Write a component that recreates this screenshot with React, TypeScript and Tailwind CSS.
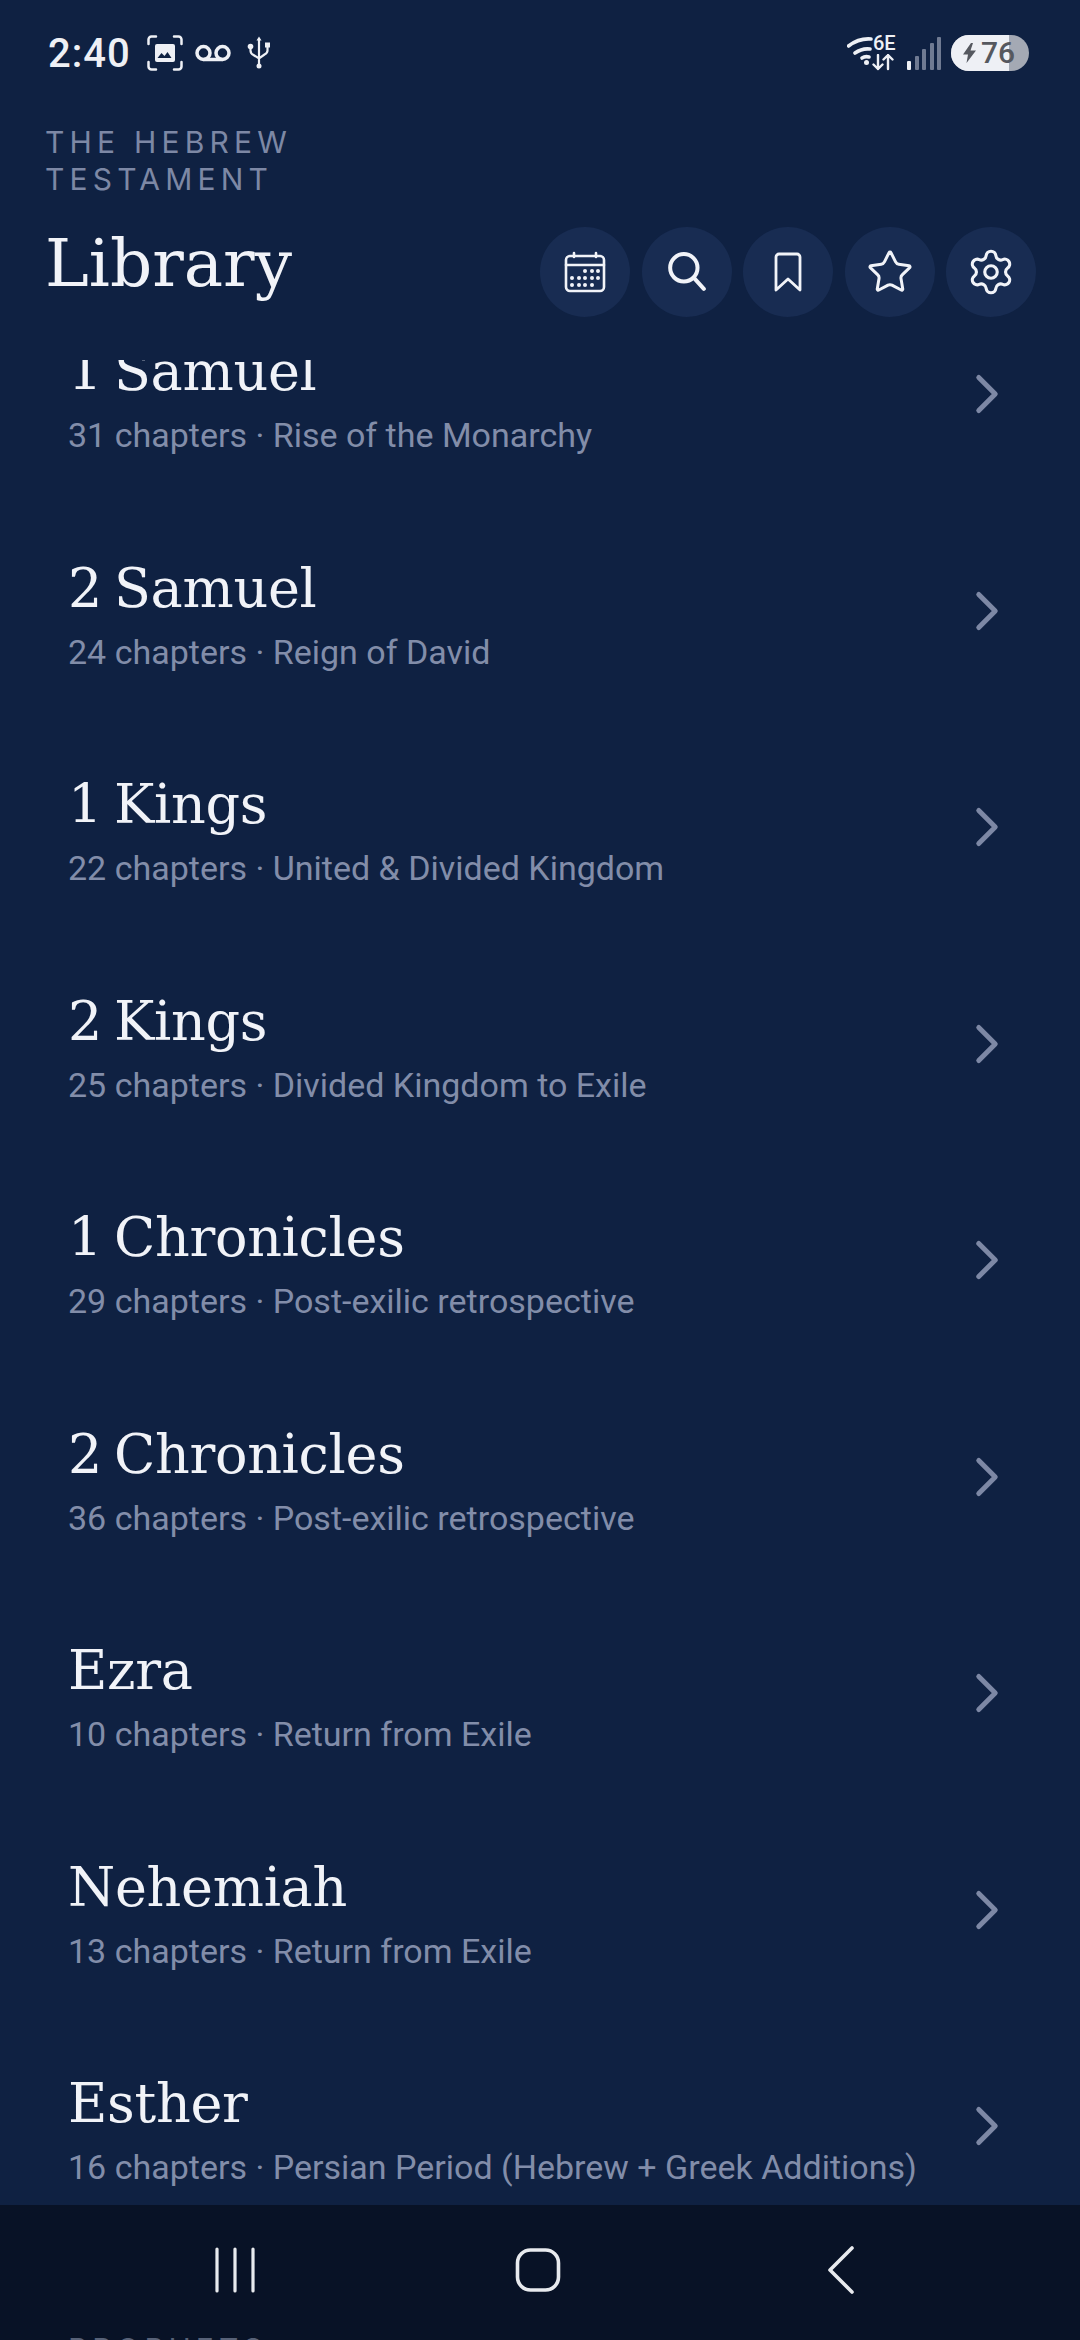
import { ChevronRight, Star, Settings } from 'lucide-react';

const books = [
  { name: '1 Samuel', info: '31 chapters · Rise of the Monarchy' },
  { name: '2 Samuel', info: '24 chapters · Reign of David' },
  { name: '1 Kings', info: '22 chapters · United & Divided Kingdom' },
  { name: '2 Kings', info: '25 chapters · Divided Kingdom to Exile' },
  { name: '1 Chronicles', info: '29 chapters · Post-exilic retrospective' },
  { name: '2 Chronicles', info: '36 chapters · Post-exilic retrospective' },
  { name: 'Ezra', info: '10 chapters · Return from Exile' },
  { name: 'Nehemiah', info: '13 chapters · Return from Exile' },
  { name: 'Esther', info: '16 chapters · Persian Period (Hebrew + Greek Additions)' },
];

function CalendarIcon() {
  return (
    <svg width="42" height="42" viewBox="0 0 42 42" fill="none" stroke="#f1f3f8" strokeWidth="2.6" strokeLinecap="round">
      <rect x="2" y="5" width="38" height="35" rx="4" />
      <path d="M2 14h38M10 2v4M32 2v4" />
      <g fill="#f1f3f8" stroke="none">
        <circle cx="21" cy="20" r="2" /><circle cx="28" cy="20" r="2" /><circle cx="34" cy="20" r="2" />
        <circle cx="8" cy="27" r="2" /><circle cx="15" cy="27" r="2" /><circle cx="21" cy="27" r="2" /><circle cx="28" cy="27" r="2" /><circle cx="34" cy="27" r="2" />
        <circle cx="8" cy="34" r="2" /><circle cx="15" cy="34" r="2" /><circle cx="21" cy="34" r="2" /><circle cx="28" cy="34" r="2" />
      </g>
    </svg>
  );
}

function SearchIcon() {
  return (
    <svg width="38" height="40" viewBox="0 0 36 38" fill="none" stroke="#f1f3f8" strokeWidth="3.8" strokeLinecap="round">
      <circle cx="15" cy="15" r="13" />
      <path d="M25 25l9 10" />
    </svg>
  );
}

function BookmarkIcon() {
  return (
    <svg width="28" height="40" viewBox="0 0 28 40" fill="none" stroke="#f1f3f8" strokeWidth="2.8" strokeLinejoin="round">
      <path d="M2 38V5a3 3 0 0 1 3-3h18a3 3 0 0 1 3 3v33L14 27z" />
    </svg>
  );
}

function StatusLeft() {
  return (
    <div className="flex items-center">
      <span className="text-[40px] leading-none font-medium text-[#eef0f5] font-['Roboto',sans-serif] tracking-[1px] mt-[2px]">2:40</span>
      <svg className="ml-[16px]" width="36" height="36" viewBox="0 0 36 36" fill="none" stroke="#eef0f5" strokeWidth="2.5" strokeLinecap="round">
        <path d="M1.500 9V4.500a3 3 0 0 1 3-3H9M27 1.500h4.500a3 3 0 0 1 3 3V9M34.500 27v4.500a3 3 0 0 1-3 3H27M9 34.500H4.500a3 3 0 0 1-3-3V27" />
        <rect x="8" y="9" width="20" height="18" rx="2" fill="#eef0f5" stroke="none" />
        <path d="M10.500 23l4-5 3 3 3-4 4 6z" fill="#0f2142" stroke="none" />
      </svg>
      <svg className="ml-[12px]" width="36" height="18" viewBox="0 0 36 18" fill="none" stroke="#eef0f5" strokeWidth="3.500">
        <circle cx="8.500" cy="9" r="6.500" /><circle cx="27.500" cy="9" r="6.500" />
        <path d="M8.500 15.500h19" />
      </svg>
      <svg className="ml-[16px]" width="24" height="34" viewBox="0 0 24 34" fill="#eef0f5" stroke="#eef0f5" strokeWidth="2.200" strokeLinecap="round">
        <path d="M12 3v27M3.500 11v3.500q0 3 3 4.500l5.500 3.500 5.500-4q3-1.500 3-4V10" fill="none" />
        <path d="M12 0.500l-2.500 4h5z" stroke="none" />
        <circle cx="12" cy="30" r="2.500" stroke="none" />
        <circle cx="3.500" cy="10.500" r="2.800" stroke="none" />
        <rect x="18" y="6.500" width="5" height="5" stroke="none" />
      </svg>
    </div>
  );
}

function StatusRight() {
  return (
    <div className="flex items-center">
      <div className="relative w-[50px] h-[36px]">
        <svg width="30" height="32" viewBox="0 0 30 32" fill="none" stroke="#eef0f5" strokeWidth="3.600" strokeLinecap="round" className="absolute left-0 top-0">
          <path d="M1.500 11Q12 3 24 4M8 18q7-5 15-4" />
          <path d="M15 23q3-2 7-1" />
          <circle cx="19.500" cy="27.500" r="2.500" fill="#eef0f5" stroke="none" />
        </svg>
        <span className="absolute left-[26px] top-[-1px] text-[20px] leading-[18px] font-medium text-[#eef0f5] font-['Roboto',sans-serif]">6E</span>
        <svg width="22" height="17" viewBox="0 0 22 17" fill="none" stroke="#eef0f5" strokeWidth="2.400" strokeLinecap="round" strokeLinejoin="round" className="absolute left-[25px] top-[19px]">
          <path d="M6 1v14M1.500 10.500L6 15l4.500-4.500M16 15V1M11.500 5.500L16 1l4.500 4.500" />
        </svg>
      </div>
      <div className="ml-[10px] flex items-end gap-[3.500px] h-[34px]">
        <div className="w-[4px] h-[9px] rounded-[1px] bg-[#eef0f5]" />
        <div className="w-[4px] h-[14px] rounded-[1px] bg-[#6f7a92]" />
        <div className="w-[4px] h-[21px] rounded-[1px] bg-[#6f7a92]" />
        <div className="w-[4px] h-[27px] rounded-[1px] bg-[#6f7a92]" />
        <div className="w-[4px] h-[33px] rounded-[1px] bg-[#6f7a92]" />
      </div>
      <div className="relative ml-[10px] w-[78px] h-[36px] rounded-full overflow-hidden bg-[#a4a9b4] flex items-center">
        <div className="absolute left-0 top-0 bottom-0 w-[58px] bg-[#eef0f5]" />
        <svg className="relative ml-[11px]" width="15" height="20" viewBox="0 0 15 20" fill="#55585f">
          <path d="M9 0L1 11.500h5L4.500 20 14 7.500H8.500L11 0z" />
        </svg>
        <span className="relative ml-[4px] text-[30px] leading-none font-medium text-[#55585f] font-['Roboto',sans-serif]">76</span>
      </div>
    </div>
  );
}

export default function App() {
  return (
    <div className="relative w-[1080px] h-[2340px] overflow-hidden bg-[#0f2142] flex flex-col">
      <div className="flex justify-between items-center h-[104px] pl-[48px] pr-[51px] pt-[1px] shrink-0">
        <StatusLeft />
        <StatusRight />
      </div>

      <header className="shrink-0 h-[256px] pl-[45px] pr-[44px]">
        <p className="pt-[20px] text-[30px] leading-[37px] tracking-[5.200px] text-[#7d88a5] font-['Inter',sans-serif] w-[300px]">THE HEBREW TESTAMENT</p>
        <div className="flex items-center justify-between mt-[13px]">
          <h1 className="text-[66px] leading-[88px] text-[#f1f3f8] font-['DejaVu_Serif',serif]">Library</h1>
          <div className="flex gap-[11.500px] mt-[16px]">
            <button className="w-[90px] h-[90px] rounded-full bg-[#182c52] flex items-center justify-center"><CalendarIcon /></button>
            <button className="w-[90px] h-[90px] rounded-full bg-[#182c52] flex items-center justify-center"><SearchIcon /></button>
            <button className="w-[90px] h-[90px] rounded-full bg-[#182c52] flex items-center justify-center"><BookmarkIcon /></button>
            <button className="w-[90px] h-[90px] rounded-full bg-[#182c52] flex items-center justify-center"><Star size={48} color="#f1f3f8" strokeWidth={1.500} /></button>
            <button className="w-[90px] h-[90px] rounded-full bg-[#182c52] flex items-center justify-center"><Settings size={50} color="#f1f3f8" strokeWidth={1.500} /></button>
          </div>
        </div>
      </header>

      <main className="relative flex-1 overflow-hidden">
        <div className="-mt-[70px]">
          {books.map((b) => (
            <div key={b.name} className="h-[216.500px] pl-[68px] pr-[60px] flex items-center justify-between">
              <div>
                <h2 className="text-[54px] leading-[73px] tracking-[-0.3px] [word-spacing:-5px] text-[#f1f3f8] font-['DejaVu_Serif',serif]">{b.name}</h2>
                <p className="mt-[1px] text-[34px] leading-[52px] text-[#828da9] font-['Roboto',sans-serif]">{b.info}</p>
              </div>
              <ChevronRight className="mb-[8px]" size={66} color="#7d88a5" strokeWidth={1.800} />
            </div>
          ))}
        </div>
      </main>

      <nav className="absolute left-0 right-0 bottom-0 h-[135px] bg-[#081226] flex items-center justify-center">
        <div className="flex items-center mb-[5px] mr-[10px]">
          <svg width="42" height="46" viewBox="0 0 42 46" stroke="#e8eaee" strokeWidth="3.200" strokeLinecap="round"><path d="M3 2v42M21 2v42M39 2v42" /></svg>
          <svg className="ml-[259px]" width="46" height="46" viewBox="0 0 46 46" fill="none" stroke="#e8eaee" strokeWidth="3.600"><rect x="2.500" y="3" width="41" height="40" rx="13" /></svg>
          <svg className="ml-[265px]" width="30" height="50" viewBox="0 0 30 50" fill="none" stroke="#e8eaee" strokeWidth="3.600" strokeLinecap="round" strokeLinejoin="round"><path d="M26 3L4 25l22 22" /></svg>
        </div>
        <span className="absolute left-[68px] top-[129px] text-[30px] leading-[30px] tracking-[5px] text-[#586278] font-['Inter',sans-serif]">PROPHETS</span>
      </nav>
    </div>
  );
}
